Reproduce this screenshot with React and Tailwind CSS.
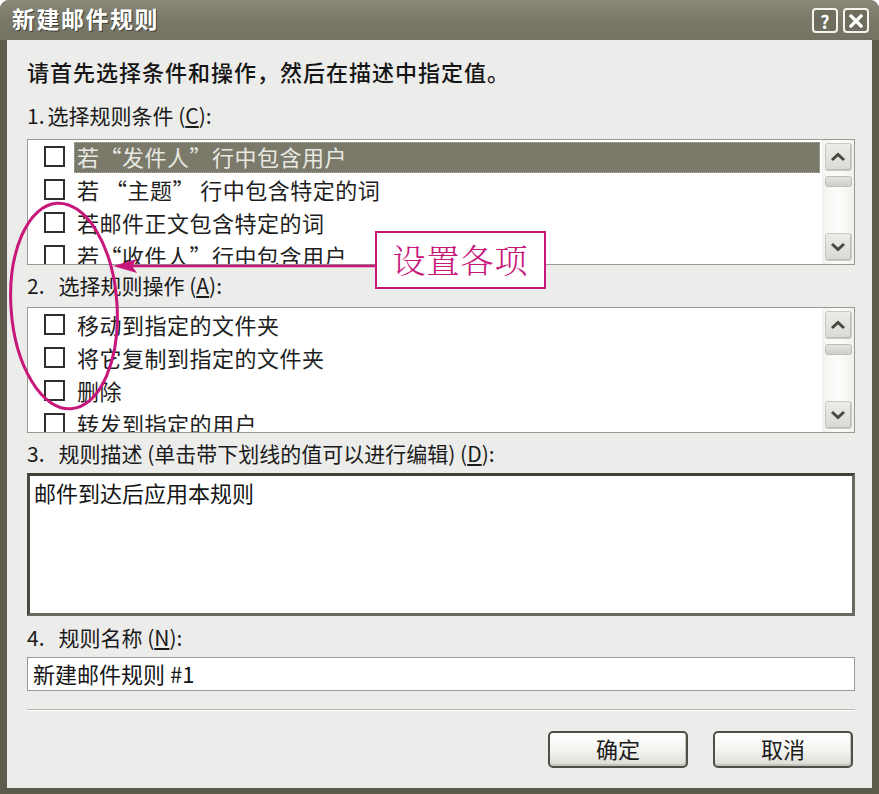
import React from "react";

const FONT = "font-['Noto_Sans_CJK_SC','Liberation_Sans',sans-serif]";

function Checkbox() {
  return <div className="w-[21px] h-[21px] border-2 border-[#2f2f2f] bg-white shrink-0" />;
}

function Chevron({ up }) {
  return (
    <svg width="16" height="10" viewBox="0 0 16 10">
      <path
        d={up ? "M2 8 L8 2.5 L14 8" : "M2 2 L8 7.5 L14 2"}
        fill="none"
        stroke="#4a4a40"
        strokeWidth="3"
        strokeLinejoin="miter"
      />
    </svg>
  );
}

function ScrollBar() {
  return (
    <div className="w-[32px] shrink-0 flex flex-col items-center py-[3px] bg-gradient-to-r from-[#f2f2ee] via-[#fdfdfc] to-[#f0f0ec]">
      <div className="w-[27px] h-[28px] rounded-[3px] border border-[#c9c9c3] bg-gradient-to-b from-[#ececea] to-[#d9d9d4] flex items-center justify-center shadow-[inset_-1px_-1px_0_#bdbdb6]">
        <Chevron up />
      </div>
      <div className="w-[27px] h-[11px] mt-[5px] rounded-[3px] border border-[#bdbdb6] bg-gradient-to-b from-[#e4e4e0] to-[#d0d0ca]" />
      <div className="flex-1" />
      <div className="w-[27px] h-[28px] rounded-[3px] border border-[#c9c9c3] bg-gradient-to-b from-[#ececea] to-[#d9d9d4] flex items-center justify-center shadow-[inset_-1px_-1px_0_#bdbdb6]">
        <Chevron />
      </div>
    </div>
  );
}

function ListBox({ items, selected }) {
  return (
    <div className="h-[126px] border border-[#9a9a94] bg-white flex overflow-hidden">
      <div className="flex-1 overflow-hidden pl-[16px] pr-[2px]">
        {items.map((t, i) => (
          <div key={i} className="h-[33px] flex items-center shrink-0">
            <Checkbox />
            <div
              className={
                "ml-[9px] h-[31px] self-end flex items-center pl-[3px] pb-[4px] flex-1 text-[22px] leading-none " +
                (i === selected
                  ? "bg-[#7b7a6a] text-[#e8e8e2] outline-1 outline-dotted outline-[#b0b0a0] -outline-offset-1"
                  : "text-[#1e1e1e]")
              }
            >
              <span className="whitespace-pre tracking-[0.5px]">{t}</span>
            </div>
          </div>
        ))}
      </div>
      <ScrollBar />
    </div>
  );
}

function Label({ children, className = "" }) {
  return (
    <div className={"h-[30px] flex items-center pb-[2px] text-[21px] leading-none text-[#1a1a1a] whitespace-pre " + className}>
      {children}
    </div>
  );
}

function Btn({ children }) {
  return (
    <div className="w-[140px] h-[37px] rounded-[5px] border-2 border-[#4f4f48] bg-gradient-to-b from-[#ffffff] via-[#f4f4f1] to-[#dcdcd6] flex items-center justify-center pb-[4px] text-[22px] leading-none text-[#1a1a1a] shadow-[inset_-1px_-2px_0_#c4c4bc]">
      {children}
    </div>
  );
}

export default function App() {
  return (
    <div className={"w-[879px] h-[794px] bg-white relative " + FONT}>
      <div className="w-full h-full rounded-t-[9px] bg-[#5d5c4c] flex flex-col overflow-hidden">
        {/* title bar */}
        <div className="h-[40px] shrink-0 bg-gradient-to-b from-[#8a8979] via-[#7a7969] to-[#747363] flex items-center justify-between pl-[12px] pr-[10px]">
          <div className="text-[23px] font-bold text-white tracking-[1.5px] leading-none pb-[3px] [text-shadow:1px_1px_0_#3e3d32]">
            新建邮件规则
          </div>
          <div className="flex gap-[5px] mt-[1px]">
            <div className="w-[26px] h-[25px] rounded-[4px] border-2 border-[#f4f4ee] bg-[#6e6d5e] flex items-center justify-center text-white font-bold text-[18px] leading-none">
              ?
            </div>
            <div className="w-[26px] h-[25px] rounded-[4px] border-2 border-[#f4f4ee] bg-[#6e6d5e] flex items-center justify-center">
              <svg width="14" height="14" viewBox="0 0 14 14">
                <path d="M2 2 L12 12 M12 2 L2 12" stroke="white" strokeWidth="3.2" strokeLinecap="square" />
              </svg>
            </div>
          </div>
        </div>
        {/* body */}
        <div className="flex-1 ml-[7px] mr-[7px] mb-[6px] bg-[#ececea] pl-[20px] pr-[17px] flex flex-col">
          <div className="mt-[17px] h-[30px] flex items-center pb-[3px] text-[22px] leading-none text-[#151515] tracking-[1px] font-medium">
            请首先选择条件和操作，然后在描述中指定值。
          </div>
          <Label className="mt-[14px]">
            1.<span className="ml-[3px]">选择规则条件 (<u>C</u>):</span>
          </Label>
          <div className="mt-[8px]">
            <ListBox
              selected={0}
              items={["若“发件人”行中包含用户", "若 “主题” 行中包含特定的词", "若邮件正文包含特定的词", "若“收件人”行中包含用户"]}
            />
          </div>
          <Label className="mt-[6px]">
            2.<span className="ml-[14px]">选择规则操作 (<u>A</u>):</span>
          </Label>
          <div className="mt-[6px]">
            <ListBox
              selected={-1}
              items={["移动到指定的文件夹", "将它复制到指定的文件夹", "删除", "转发到指定的用户"]}
            />
          </div>
          <Label className="mt-[6px]">
            3.<span className="ml-[14px]">规则描述 (单击带下划线的值可以进行编辑) (<u>D</u>):</span>
          </Label>
          <div className="mt-[4px] h-[143px] bg-white border-[3px] border-t-[#3f3f38] border-l-[#4a4a42] border-r-[#6a6a62] border-b-[#6a6a62] px-[4px] pt-[5px]">
            <div className="text-[22px] leading-none text-[#151515]">邮件到达后应用本规则</div>
          </div>
          <Label className="mt-[7px]">
            4.<span className="ml-[14px]">规则名称 (<u>N</u>):</span>
          </Label>
          <div className="mt-[4px] h-[34px] bg-white border border-[#9a9a94] flex items-center pb-[3px] px-[5px] text-[22px] leading-none text-[#151515]">
            新建邮件规则 #1
          </div>
          <div className="mt-[18px] h-[2px] bg-[#b8b8b2] border-b border-white" />
          <div className="mt-[20px] flex justify-end gap-[25px] pr-[2px]">
            <Btn>确定</Btn>
            <Btn>取消</Btn>
          </div>
        </div>
      </div>

      {/* annotation overlay */}
      <svg className="absolute left-0 top-0 pointer-events-none" width="879" height="794">
        <ellipse cx="64" cy="306" rx="53" ry="103" fill="none" stroke="#c8177a" strokeWidth="3" transform="rotate(-4 64 306)" />
        <line x1="128" y1="266" x2="376" y2="266" stroke="#c8177a" strokeWidth="2.5" />
        <path d="M113 266 L137 259 L132 266 L137 273 Z" fill="#c8177a" />
      </svg>
      <div className="absolute left-[375px] top-[231px] w-[171px] h-[58px] border-[2.5px] border-[#c8177a] bg-white flex items-center justify-center pb-[3px] text-[33px] leading-none text-[#c8177a] tracking-[1px] font-['Noto_Serif_CJK_SC','Noto_Sans_CJK_SC',serif] font-light">
        设置各项
      </div>
    </div>
  );
}
